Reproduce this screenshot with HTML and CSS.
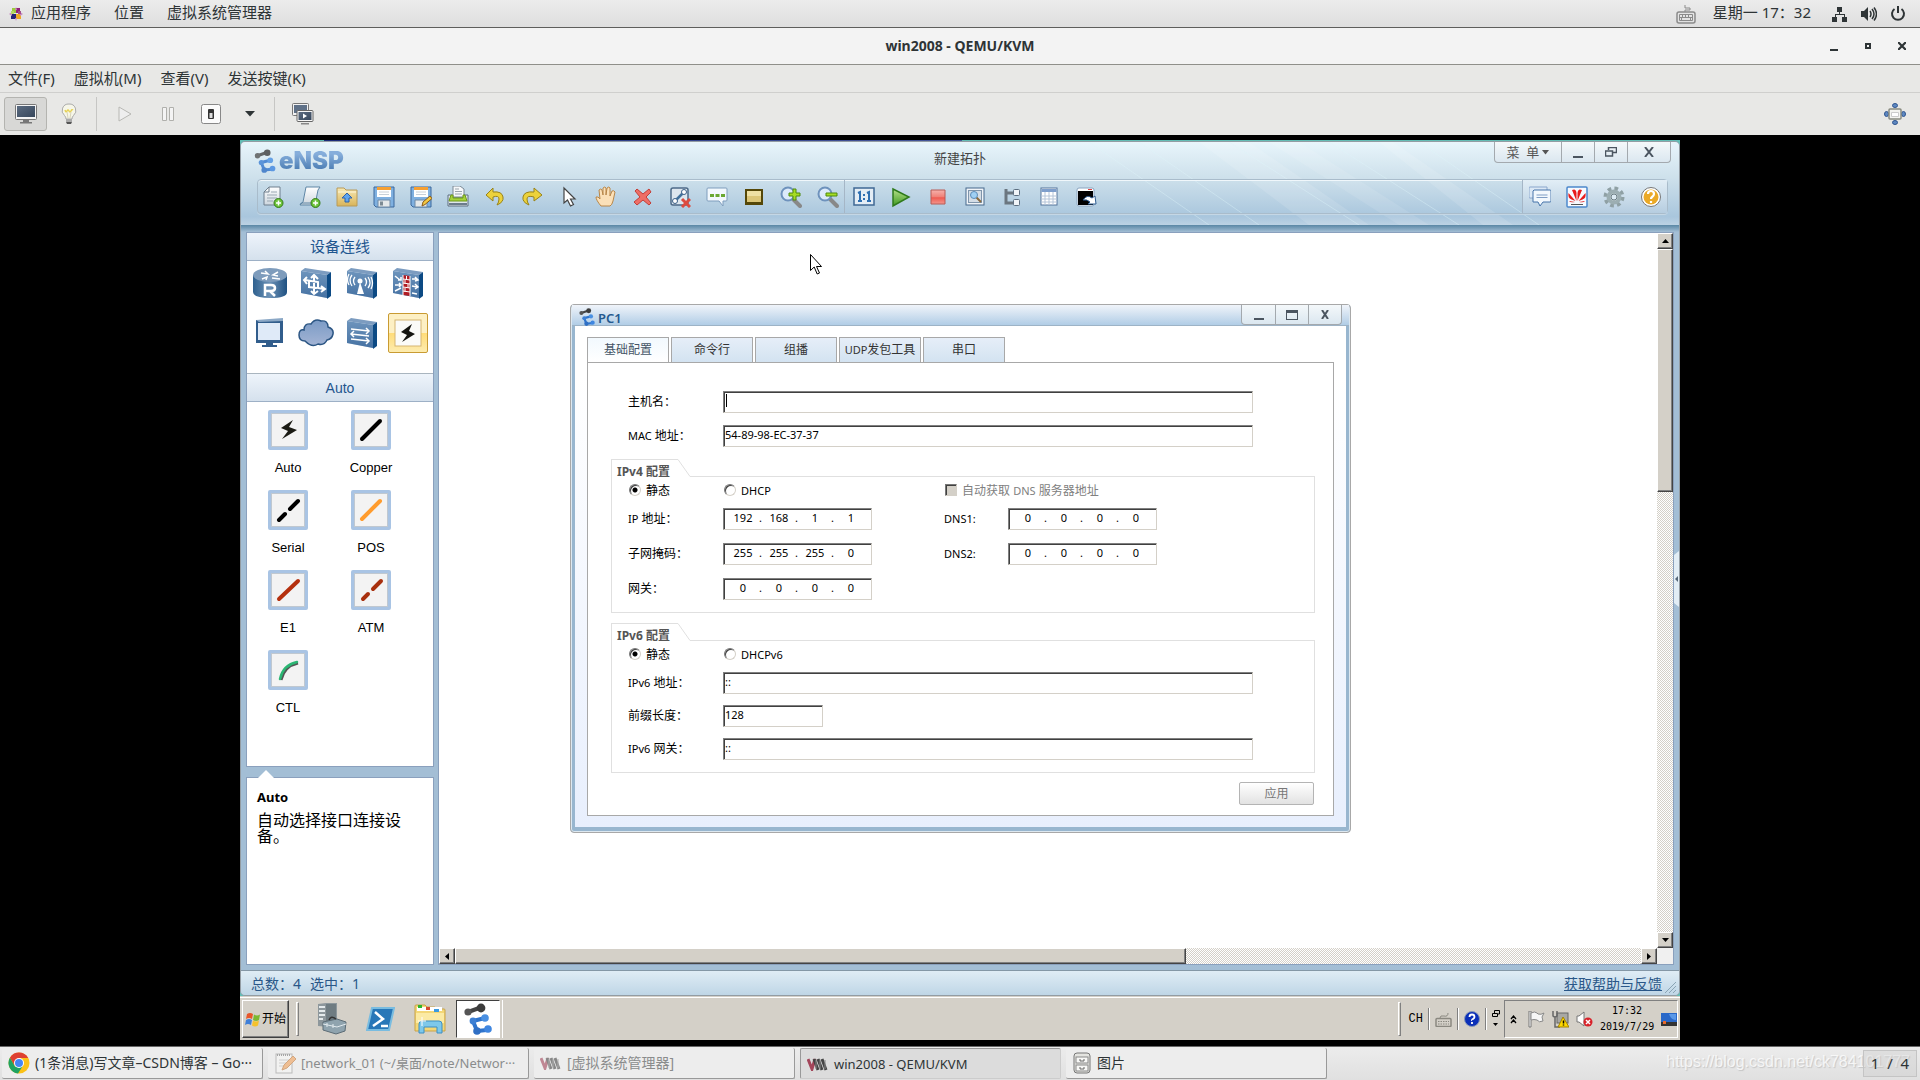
FILE: index.html
```html
<!DOCTYPE html>
<html lang="zh-CN">
<head>
    <meta charset="UTF-8">
    <meta name="viewport" content="width=device-width, initial-scale=1.0">
    <title>win2008 - QEMU/KVM</title>
    <link rel="stylesheet" href="styles.css">
</head>
<body>
    <!-- shared gradients and the eNSP logo -->
    <svg class="defs" aria-hidden="true">
        <defs>
            <linearGradient id="gBlue" x1="0" y1="0" x2="0" y2="1"><stop offset="0" stop-color="#8fb0d3"/><stop offset="1" stop-color="#4c76a8"/></linearGradient>
            <linearGradient id="gPaper" x1="0" y1="0" x2="0" y2="1"><stop offset="0" stop-color="#ffffff"/><stop offset="1" stop-color="#cdd6de"/></linearGradient>
            <linearGradient id="gGreen" x1="0" y1="0" x2="0" y2="1"><stop offset="0" stop-color="#b6e08a"/><stop offset="1" stop-color="#3f9a20"/></linearGradient>
            <linearGradient id="gGold" x1="0" y1="0" x2="0" y2="1"><stop offset="0" stop-color="#f7e9b4"/><stop offset="1" stop-color="#d9b45a"/></linearGradient>
            <linearGradient id="gRed" x1="0" y1="0" x2="0" y2="1"><stop offset="0" stop-color="#f6b2ac"/><stop offset=".5" stop-color="#f08076"/><stop offset=".55" stop-color="#ee5a50"/><stop offset="1" stop-color="#f4978e"/></linearGradient>
            <linearGradient id="gScreen" x1="0" y1="0" x2="1" y2="1"><stop offset="0" stop-color="#5b6b80"/><stop offset="1" stop-color="#37475c"/></linearGradient>
            <linearGradient id="gRouter" x1="0" y1="0" x2="1" y2="0"><stop offset="0" stop-color="#2f618f"/><stop offset=".5" stop-color="#6d92b6"/><stop offset="1" stop-color="#1f5182"/></linearGradient>
            <linearGradient id="gCloud" x1="0" y1="0" x2="0" y2="1"><stop offset="0" stop-color="#7b9bc6"/><stop offset="1" stop-color="#a3b4d4"/></linearGradient>
        </defs>
        <symbol id="ensp" viewBox="0 0 28 32">
            <path d="M4 9L18 4" stroke="#444" stroke-width="4"/>
            <circle cx="4" cy="9" r="3.6" fill="#555"/><circle cx="17" cy="5" r="4.4" fill="#3c3c3c"/>
            <path d="M21 15L9 18L13 28L23 27" fill="none" stroke="#2f74cc" stroke-width="4" stroke-linejoin="round"/>
            <circle cx="21" cy="15" r="3.8" fill="#4a90e2"/><circle cx="9" cy="18" r="3.4" fill="#3c7fd4"/>
            <circle cx="13" cy="28" r="3.8" fill="#2f6fc4"/><circle cx="24" cy="26" r="3.8" fill="#3f86e0"/>
        </symbol>
        <symbol id="vmm" viewBox="0 0 22 14">
            <path d="M1 2l4 10 3-10" fill="none" stroke="#a3455a" stroke-width="3"/>
            <path d="M7 2l4 11M11 2l4 11M15 2l4 11" stroke="#444" stroke-width="3"/>
            <path d="M9 12V3M13 12V3M18 12V3" stroke="#888" stroke-width="1"/>
        </symbol>
        <symbol id="box" viewBox="0 0 34 32">
            <path d="M2 4L6 1L32 5L28 8z" fill="#7c9cc0"/><path d="M28 8L32 5V29L28 32z" fill="#0c4a84"/>
            <path d="M2 4L28 8V31L2 26z" fill="url(#gBlue)"/><path d="M2 4L28 8V31L2 26z" fill="#3d6b9c" fill-opacity=".4"/>
        </symbol>
    </svg>

    <header class="panel">
        <nav class="panel-menu">
            <svg width="14" height="14" viewBox="0 0 14 14"><rect x="3" y="1" width="4" height="5" fill="#9ccc3c"/><rect x="7" y="1" width="4" height="5" fill="#932279"/><rect x="2" y="7" width="5" height="5" fill="#262577"/><rect x="7" y="7" width="5" height="5" fill="#efa724"/><path d="M7 0l1 3H6zM7 14l1-3H6zM0 7l3-2v4zM14 7l-3-2v4z" fill="#c88ac0"/><rect x="2" y="4" width="3" height="3" fill="#b8d868"/><rect x="9" y="4" width="3" height="3" fill="#a14f8c"/></svg>
            <a href="#">应用程序</a>
            <a href="#">位置</a>
            <a href="#">虚拟系统管理器</a>
        </nav>
        <div class="panel-status">
            <svg class="kbd" width="20" height="20" viewBox="0 0 20 20" fill="none" stroke="#8b8b8b"><path d="M9 8V6h5V4H9V1"/><rect x="1" y="8" width="18" height="11" rx="2" stroke-width="1.5"/><path d="M3.5 10.500h13v6h-13zM3.500 13.500h13M6.500 10.500v3M9.500 10.500v3M12.500 10.500v3M5.500 13.500v3M14.500 13.500v3"/></svg>
            <time>星期一 17：32</time>
            <svg width="16" height="16" viewBox="0 0 16 16" fill="#2e3436"><path d="M5 1h5v5H8v2h5v3h2v5h-5v-5h2V9H4v2h1v5H0v-5h3V8h4V6H5z"/></svg>
            <svg width="16" height="16" viewBox="0 0 16 16" fill="#2e3436"><path d="M0 5h3l4-4v14l-4-4H0z"/><path d="M9 5q2 3 0 6M11 3q4 5 0 10M13 1.500q5 6.500 0 13" fill="none" stroke="#2e3436" stroke-width="1.500"/></svg>
            <svg width="16" height="16" viewBox="0 0 16 16" fill="none" stroke="#2e3436" stroke-width="2"><path d="M4.500 3a6 6 0 1 0 7 0M8 0v7"/></svg>
        </div>
    </header>

    <div class="titlebar">
        <h1>win2008 - QEMU/KVM</h1>
        <div class="title-buttons">
            <button aria-label="最小化"><svg width="8" height="10" viewBox="0 0 8 10"><path d="M0 8h8v2H0z"/></svg></button>
            <button aria-label="最大化"><svg width="6" height="6" viewBox="0 0 6 6"><path d="M0 0h6v6H0zM2 2v2h2V2z" fill-rule="evenodd"/></svg></button>
            <button aria-label="关闭"><svg width="8" height="8" viewBox="0 0 8 8"><path d="M0 0l8 8M8 0L0 8" stroke="#2e3436" stroke-width="2.200"/></svg></button>
        </div>
    </div>

    <nav class="menubar">
        <a href="#">文件(F)</a>
        <a href="#">虚拟机(M)</a>
        <a href="#">查看(V)</a>
        <a href="#">发送按键(K)</a>
    </nav>

    <div class="toolbar">
        <button class="active" aria-label="控制台"><svg width="22" height="20" viewBox="0 0 22 20"><rect x=".5" y=".5" width="21" height="15" rx="1" fill="#f4f4f4" stroke="#777"/><rect x="2" y="2" width="18" height="11" fill="url(#gScreen)"/><path d="M8 16h6v2h3v1.500H5V18h3z" fill="#777"/></svg></button>
        <button aria-label="详情"><svg width="16" height="22" viewBox="0 0 16 22"><path d="M8 1a6.500 6.500 0 0 0-4.500 11.500Q5 14 5 16h6q0-2 1.500-3.500A6.500 6.500 0 0 0 8 1z" fill="#f6f6e8" stroke="#aaa"/><path d="M4 7q1 3 2 1t2 0 2 0 2-1" fill="none" stroke="#e6d255" stroke-width="1.500"/><path d="M6 9l1 6M10 9l-1 6" stroke="#d8d4b8"/><path d="M5 16h6v3H5z" fill="#aaa"/><path d="M5 19h6l-1 2H6z" fill="#555"/></svg></button>
        <i class="sep"></i>
        <button aria-label="运行"><svg width="14" height="16" viewBox="0 0 14 16"><path d="M1 1l12 7-12 7z" fill="#eee" stroke="#b8b8b4"/></svg></button>
        <button aria-label="暂停"><svg width="14" height="14" viewBox="0 0 14 14" fill="#f4f4f4" stroke="#b0b0ac"><path d="M1.500.5h4v13h-4zM8.500.5h4v13h-4z"/></svg></button>
        <button aria-label="关机"><svg width="20" height="20" viewBox="0 0 20 20"><rect x=".5" y=".5" width="19" height="19" rx="2" fill="#fbfbfb" stroke="#888"/><rect x="7" y="5" width="6" height="10" rx="1" fill="#333"/><rect x="8.500" y="9" width="3" height="5" fill="#ddd"/></svg></button>
        <button class="drop" aria-label="更多"><svg width="10" height="6" viewBox="0 0 10 6"><path d="M0 0h10L5 5.500z" fill="#2e3436"/></svg></button>
        <i class="sep"></i>
        <button aria-label="快照"><svg width="22" height="22" viewBox="0 0 22 22"><rect x=".5" y=".5" width="16" height="12" rx="1" fill="#f2f2f2" stroke="#777"/><rect x="2" y="2" width="13" height="8" fill="#5f7188"/><rect x="5" y="7.500" width="16" height="11" rx="1" fill="#f6f6f6" stroke="#666"/><rect x="6.500" y="9" width="13" height="8" fill="url(#gScreen)"/><path d="M11 10.500l4 2.500-4 2.500z" fill="#fff"/><path d="M9 20h8v1.500H9z" fill="#888"/></svg></button>
        <button class="full" aria-label="全屏"><svg width="22" height="22" viewBox="0 0 22 22"><g fill="#5d87c0" stroke="#2f5590"><ellipse cx="11" cy="2.500" rx="2.500" ry="2"/><ellipse cx="11" cy="19.500" rx="2.500" ry="2"/><ellipse cx="2.500" cy="11" rx="2" ry="2.500"/><ellipse cx="19.500" cy="11" rx="2" ry="2.500"/></g><rect x="5" y="6" width="12" height="10" rx="1" fill="#f4f4f0" stroke="#888a80" stroke-width="1.500"/><path d="M7.500 9.500h7v4h-7z" fill="#fff" stroke="#ccc"/></svg></button>
    </div>

    <main class="viewer">
        <div class="guest">
            <section class="ensp">
                <header class="ensp-head">
                    <svg class="streaks" viewBox="0 0 480 83" preserveAspectRatio="none" aria-hidden="true"><g fill="#fff"><path opacity=".12" d="M120 0h50l120 83h-60z"/><path opacity=".1" d="M190 0h30l130 83h-30z"/><path opacity=".12" d="M300 0h14l120 83h-30z"/></g><path d="M10 0l120 83M60 0l120 83M150 0l130 83M250 0l130 83M340 0l120 83" stroke="#dff4fa" stroke-opacity=".4"/></svg>
                    <div class="caption">
                        <div class="brand"><svg width="22" height="24"><use href="#ensp"/></svg><b>eNSP</b></div>
                        <h2>新建拓扑</h2>
                        <div class="win-buttons">
                            <button class="menu-button">菜&nbsp; 单<svg width="7" height="5" viewBox="0 0 7 5"><path d="M0 0h7L3.500 4.500z" fill="#555"/></svg></button>
                            <button aria-label="最小化"><svg width="10" height="12" viewBox="0 0 10 12"><path d="M0 10h10v2H0z" fill="#4b5560"/></svg></button>
                            <button aria-label="还原"><svg width="12" height="10" viewBox="0 0 12 10" fill="none" stroke="#4b5560"><path d="M3.500 3V.5h8v5H8" stroke-width="1.500"/><path d="M.5 4h7v5h-7z" stroke-width="1.500"/></svg></button>
                            <button class="close" aria-label="关闭"><svg width="10" height="10" viewBox="0 0 10 10"><path d="M1 0l8 10M9 0L1 10" stroke="#4b5560" stroke-width="2"/></svg></button>
                        </div>
                    </div>
                    <div class="tools">
                        <div class="tool-group">
                            <button aria-label="新建拓扑"><svg viewBox="0 0 22 22"><path d="M7 1h11v18H2V6z" fill="url(#gPaper)" stroke="#6f7f8d"/><path d="M7 1v5H2" fill="none" stroke="#6f7f8d"/><path d="M9 6h6M5 9h10M5 12h10M5 15h6" stroke="#9aa7b2"/><circle cx="16.500" cy="17" r="4.500" fill="#6cc43a" stroke="#357a18"/><path d="M16.500 14.500v5M14 17h5" stroke="#fff" stroke-width="1.500"/></svg></button>
                            <button aria-label="新建试卷工程"><svg viewBox="0 0 22 22"><path d="M7 1h14l-2 3-3 15H1l3-3z" fill="url(#gPaper)" stroke="#5f86a5"/><path d="M1 19l1-2h12" fill="none" stroke="#5f86a5"/><circle cx="16.500" cy="17" r="4.500" fill="#6cc43a" stroke="#357a18"/><path d="M16.500 14.500v5M14 17h5" stroke="#fff" stroke-width="1.500"/></svg></button>
                            <button aria-label="打开"><svg viewBox="0 0 22 22"><path d="M1 2h7l2 2h11v16H1z" fill="url(#gGold)" stroke="#b89a58"/><path d="M2 6h18" stroke="#fff6d8"/><path d="M11 7l5 5h-3v4H9v-4H6z" fill="#5fa4ee" stroke="#2f62a8"/></svg></button>
                            <button aria-label="保存"><svg viewBox="0 0 22 22"><path d="M1 1h20v20H3l-2-2z" fill="#7fb0e0" stroke="#3c689c"/><path d="M4 1h14v10H4z" fill="#fff"/><path d="M4 1h14v3H4z" fill="#f6a032"/><path d="M6 6h10M6 8.500h10" stroke="#c8d0d8"/><path d="M5 14h12v7H5z" fill="#e4e8ea" stroke="#6e8aa6"/><path d="M7 15.500h3v4H7z" fill="#7c8a94"/></svg></button>
                            <button aria-label="另存为"><svg viewBox="0 0 22 22"><path d="M1 1h20v20H3l-2-2z" fill="#7fb0e0" stroke="#3c689c"/><path d="M4 1h14v10H4z" fill="#fff"/><path d="M4 1h14v3H4z" fill="#f6a032"/><path d="M6 6h10M6 8.500h10" stroke="#c8d0d8"/><path d="M5 14h12v7H5z" fill="#e4e8ea" stroke="#6e8aa6"/><path d="M12 20l1-4 7-6 2 2.500-7 6z" fill="#f4c842" stroke="#8a5a18"/></svg></button>
                            <button aria-label="打印"><svg viewBox="0 0 22 22"><path d="M6 0h7l4 3v8H6z" fill="#f6f8fa" stroke="#7a8894"/><path d="M8 3h4M8 5.500h7M8 8h7" stroke="#9aa4ac"/><path d="M1 9h4v3h12V9h4v11H1z" fill="#dfe6ec" stroke="#5c6e80"/><path d="M4 9h2v3h10V9h2l2 6H2z" fill="#a4d23c" stroke="#6f9a18"/><path d="M2 18h18" stroke="#6c7c8c" stroke-width="2"/></svg></button>
                            <button aria-label="撤销"><svg viewBox="0 0 22 22"><path d="M9 2L2 9l7 6v-4q6-2 6 2 0 3-2 6 7-3 6-8-1-6-10-5z" fill="#ecd23c" stroke="#97821a"/></svg></button>
                            <button aria-label="恢复"><svg viewBox="0 0 22 22"><path d="M13 2l8 7-8 6v-4q-7-2-7 2 0 3 2 6-7-3-6-8 1-6 11-5z" fill="#ecd23c" stroke="#97821a"/></svg></button>
                            <button aria-label="选择"><svg viewBox="0 0 22 22"><path d="M6 2v15l3.500-3 3 6 3-1.500-3-5.500H17z" fill="#fff" stroke="#444" stroke-width="1.200"/></svg></button>
                            <button aria-label="拖动"><svg viewBox="0 0 22 22"><path d="M6 20Q1 14 1 11q2-1 4 2L4 4q2-2 3 0l1 5V2q2-2 3 0v7l1-7q2-2 3 0v8l2-5q2-1 3 1l-2 9q-1 4-3 5z" fill="#fbe0b8" stroke="#b88648"/></svg></button>
                            <button aria-label="删除"><svg viewBox="0 0 22 22"><path d="M5 3l6 5 6-5 2 3-5 5 5 6-2 2-6-5-6 5-3-3 6-5-5-6z" fill="#ee6e66" stroke="#c23e38"/></svg></button>
                            <button aria-label="删除连线"><svg viewBox="0 0 22 22"><rect x="2" y="2" width="17" height="17" rx="2" fill="#dde6ee" stroke="#4d6a88" stroke-width="1.500"/><path d="M6 15L15 6" stroke="#42719c" stroke-width="2.500"/><circle cx="6" cy="15" r="2.500" fill="#fff" stroke="#3b6088"/><circle cx="15" cy="6" r="2.500" fill="#fff" stroke="#3b6088"/><path d="M13 13l8 8M21 13l-8 8" stroke="#dc4a3e" stroke-width="3"/></svg></button>
                            <button aria-label="文本"><svg viewBox="0 0 22 22"><path d="M2 2h18q1 0 1 1v11q0 1-1 1h-3v5l-4-5H2q-1 0-1-1V3q0-1 1-1z" fill="#f2f8fd" stroke="#7f9dbd"/><path d="M4 8h4v3H4zM9.500 8h4v3h-4zM15 8h4v3h-4z" fill="#6aa832"/></svg></button>
                            <button aria-label="调色板"><svg viewBox="0 0 22 22"><path d="M2 3h18v16H2z" fill="#554708"/><path d="M4 5h14v11H4z" fill="#dcc678"/><path d="M4 5h14v5H4z" fill="#eee0a4"/></svg></button>
                            <button aria-label="放大"><svg viewBox="0 0 22 22"><path d="M13 13l7 7" stroke="#888" stroke-width="4" stroke-linecap="round"/><circle cx="8" cy="8" r="6.500" fill="#dceafa" stroke="#6e92bc" stroke-width="2"/><path d="M9 7h4V3h3v4h4v3h-4v4h-3v-4H9z" fill="#a6dc24" stroke="#4f8a0e"/></svg></button>
                            <button aria-label="缩小"><svg viewBox="0 0 22 22"><path d="M13 13l7 7" stroke="#888" stroke-width="4" stroke-linecap="round"/><circle cx="8" cy="8" r="6.500" fill="#dceafa" stroke="#6e92bc" stroke-width="2"/><path d="M9 7h11v3H9z" fill="#a6dc24" stroke="#4f8a0e"/></svg></button>
                        </div>
                        <div class="tool-group middle">
                            <button aria-label="恢复比例"><svg viewBox="0 0 22 22"><rect x="1" y="2" width="20" height="17" fill="#e4edf5" stroke="#3f6894" stroke-width="1.500"/><path d="M5 7l2-1v9M5 15h4M14 7l2-1v9M14 15h4" fill="none" stroke="#2d6fb2" stroke-width="2"/><path d="M10 8h2v2h-2zM10 12h2v2h-2z" fill="#2d6fb2"/></svg></button>
                            <button aria-label="开启设备"><svg viewBox="0 0 22 22"><path d="M3 3l16 8L3 20z" fill="url(#gGreen)" stroke="#2f7a1c" stroke-width="1.500"/></svg></button>
                            <button aria-label="停止设备"><svg viewBox="0 0 22 22"><path d="M4 4h14v14H4z" fill="url(#gRed)" stroke="#b85a54"/></svg></button>
                            <button aria-label="采集数据报文"><svg viewBox="0 0 22 22"><rect x="2" y="2" width="18" height="17" fill="#f0f4f8" stroke="#46688c"/><rect x="4.500" y="4.500" width="13" height="12" fill="#d4dde6" stroke="#7f95ab"/><path d="M12 11l5 5" stroke="#8a6a3c" stroke-width="2"/><circle cx="10" cy="9" r="3.500" fill="#9fd0f4" stroke="#5c8cb8"/></svg></button>
                            <button aria-label="显示接口"><svg viewBox="0 0 22 22" fill="none"><path d="M5 3v14h8M5 7h8" stroke="#6b7680" stroke-width="3"/><rect x="12.500" y="3.500" width="6" height="6" rx="1" fill="#f0f4f8" stroke="#5c6e80"/><rect x="12.500" y="13.500" width="6" height="6" rx="1" fill="#f0f4f8" stroke="#5c6e80"/></svg></button>
                            <button aria-label="显示网格"><svg viewBox="0 0 22 22"><rect x="3" y="2" width="16" height="17" fill="#fff" stroke="#54749c"/><path d="M3.500 3h15v3h-15z" fill="#7f9fcc"/><path d="M3 10h16M3 13h16M3 16h16M7 6v13M11 6v13M15 6v13" stroke="#b4c4d8"/></svg></button>
                            <button aria-label="打开CLI"><svg viewBox="0 0 22 22"><rect x="2" y="2" width="17" height="18" rx="2" fill="#fff" stroke="#8aa4c0"/><path d="M3 5h15v14H3z" fill="#000"/><path d="M13 3.500h4" stroke="#d44"/><path d="M8 14q4-6 9-2l3-2 1 8h-8l2-2q-3-3-7-2z" fill="#fff" stroke="#2f5c90"/></svg></button>
                        </div>
                        <div class="tool-group right">
                            <button aria-label="论坛"><svg viewBox="0 0 22 22"><path d="M0 2q0-1 1-1h17v11H1q-1 0-1-1z" fill="#dbe8f5" stroke="#8aa6cc"/><path d="M5 4h16q1 0 1 1v10q0 1-1 1h-7l-3 4-2-4H4V5z" fill="#f2f8fd" stroke="#4674aa"/><path d="M7.500 9h11M7.500 11.500h11" stroke="#7f9dc4"/></svg></button>
                            <button aria-label="华为官网"><svg viewBox="0 0 22 22"><rect x="1" y="1" width="20" height="20" rx="1" fill="#f6faff" stroke="#4c88cc" stroke-width="1.500"/><g fill="#e81c1c"><path d="M10.500 15L6 4q4-2 4.500 3zM11.500 15L16 4q-4-2-4.500 3zM9.500 15L2.500 7q-1 5 3 6.500zM12.500 15l7-8q1 5-3 6.500zM9 16l-6-1q1 2 6 1zM13 16l6-1q-1 2-6 1z"/></g><path d="M5 18.500h12" stroke="#555"/></svg></button>
                            <button aria-label="设置"><svg viewBox="0 0 22 22"><circle cx="11" cy="11" r="8.500" fill="none" stroke="#8fa0a4" stroke-width="4" stroke-dasharray="3.600 3.100"/><circle cx="11" cy="11" r="5.500" fill="#e4eeee" stroke="#9caeb2" stroke-width="4"/><circle cx="11" cy="11" r="3" fill="#dceaf2" stroke="#6c7e84"/></svg></button>
                            <button aria-label="帮助"><svg viewBox="0 0 22 22"><circle cx="11" cy="11" r="9.500" fill="#fff" stroke="#777"/><circle cx="11" cy="11" r="7.500" fill="#eaa927"/><path d="M8 8q0-3 3-3t3 3q0 1.500-2 3-1 .700-1 2M11 15v2" fill="none" stroke="#fff" stroke-width="2.200"/></svg></button>
                        </div>
                    </div>
                </header>

                <div class="ensp-main">
                    <aside class="sidebar">
                        <div class="devices">
                            <h3>设备连线</h3>
                            <div class="device-grid">
                                <button aria-label="路由器"><svg viewBox="0 0 36 32"><path d="M1 8v17q0 6 17 6t17-6V8z" fill="url(#gRouter)"/><ellipse cx="18" cy="8" rx="17" ry="7" fill="#7e9cbc"/><path d="M9 6l7 1-3-3M26 5l-5 3 5 1M10 12l5-2-1 3M20 11l8 1" fill="none" stroke="#fff" stroke-width="1.500"/><path d="M13 29V18h6q4 0 4 3t-4 3h-6M18 24l5 5" fill="none" stroke="#fff" stroke-width="2.500"/></svg></button>
                                <button aria-label="交换机"><svg viewBox="0 0 34 32"><use href="#box"/><path d="M15 8v19M12 11l3-3 4 4M12 24l3 3 4-3M6 13l13 2v6l6 1M8 10l-3 3 3 4M10 14v6l8 1M22 19l4 3-4 3" fill="none" stroke="#fff" stroke-width="2"/></svg></button>
                                <button aria-label="无线局域网"><svg viewBox="0 0 34 32"><use href="#box"/><path d="M15 15l4 12h-7z" fill="#fff"/><circle cx="15" cy="14" r="2.500" fill="#fff"/><path d="M10 10q-3 4 0 8M7 8q-4 5 0 11M4 7q-3 6 0 11M20 11q3 4 0 8M23 10q4 6 0 11M26 10q3 6 0 12" fill="none" stroke="#fff" stroke-width="1.300"/></svg></button>
                                <button aria-label="防火墙"><svg viewBox="0 0 34 32"><use href="#box"/><path d="M12 8l7 1v20l-7-1z" fill="#b01c24"/><path d="M12 12l7 1M12 16l7 1M12 20l7 1M12 24l7 1M15.500 9v4M14 13v4M17 17v4M14 21v4M12 8v20M19 9v20" stroke="#fff"/><path d="M4 9l5 4M4 18h6M4 24l6-3M7 13h3v-3M8 16l2 2-2 2M21 12h5M21 19l5 1M21 26l5 1M24 10l3 3-3 1M24 17l3 3-3 2" fill="none" stroke="#fff" stroke-width="1.500"/></svg></button>
                                <button aria-label="终端"><svg viewBox="0 0 34 32"><path d="M3 3h27v23H3z" fill="#315d8c"/><path d="M3 3l27-2v3L6 5z" fill="#8ba8c6"/><path d="M5 6h22v17H5z" fill="#dfeaf8"/><path d="M13 25h7v3h4v2H9v-2h4z" fill="#315d8c"/></svg></button>
                                <button aria-label="其他设备"><svg viewBox="0 0 36 32"><path d="M7 24q-6 0-6-6t5-5q0-7 7-6 4-6 10-3 7-1 7 6 6 2 5 7t-6 6q-3 6-9 4-6 4-13-3z" fill="url(#gCloud)" stroke="#2c5684" stroke-width="1.500"/></svg></button>
                                <button aria-label="自定义设备"><svg viewBox="0 0 34 32"><use href="#box"/><path d="M6 12l18 2M21 11l3 3-3 3M6 17l18 2M9 14l-3 3 3 3M6 22l18 2M21 21l3 3-3 3" fill="none" stroke="#fff" stroke-width="1.500"/></svg></button>
                                <button class="selected" aria-label="设备连线"><svg viewBox="0 0 28 28"><rect x="1" y="1" width="26" height="26" fill="#fbfbf8" stroke="#d5b572"/><path d="M18 5L7 13l6 3-5 7 13-8-6-3z" fill="#151510"/></svg></button>
                            </div>
                            <h3>Auto</h3>
                            <div class="cable-grid">
                                <button><svg viewBox="0 0 28 28"><path d="M19 4L7 12l7 3-6 8 15-9-8-3z" fill="#1b1b14"/></svg><span>Auto</span></button>
                                <button><svg viewBox="0 0 28 28"><path d="M5 23L23 5" stroke="#000" stroke-width="4" stroke-linecap="round"/></svg><span>Copper</span></button>
                                <button><svg viewBox="0 0 28 28"><path d="M5 24l6-6M16 13l8-8" stroke="#000" stroke-width="4" stroke-linecap="round"/></svg><span>Serial</span></button>
                                <button><svg viewBox="0 0 28 28"><path d="M5 23L23 5" stroke="#ff9c2e" stroke-width="4" stroke-linecap="round"/></svg><span>POS</span></button>
                                <button><svg viewBox="0 0 28 28"><path d="M5 23L24 5" stroke="#b5300e" stroke-width="4" stroke-linecap="round"/></svg><span>E1</span></button>
                                <button><svg viewBox="0 0 28 28"><path d="M6 23l5-5M16 13l8-8" stroke="#a8300e" stroke-width="4" stroke-linecap="round"/></svg><span>ATM</span></button>
                                <button><svg viewBox="0 0 28 28"><path d="M7 24q3-14 17-17" fill="none" stroke="#555" stroke-width="3"/><path d="M6 23q3-14 17-17" fill="none" stroke="#2bb673" stroke-width="2.500" stroke-linecap="round"/></svg><span>CTL</span></button>
                            </div>
                        </div>
                        <div class="description">
                            <b>Auto</b>
                            <p>自动选择接口连接设备。</p>
                        </div>
                    </aside>

                    <div class="canvas">
                        <div class="topology">
                            <svg class="cursor" width="12" height="21" viewBox="0 0 12 21"><path d="M.5.5v16l3.700-3.500 3 7 2.300-1-3-6.500h5z" fill="#fff" stroke="#000"/></svg>

                            <section class="dialog">
                                <header class="dialog-title">
                                    <svg width="18" height="18"><use href="#ensp"/></svg>
                                    <h2>PC1</h2>
                                    <div class="win-buttons">
                                        <button aria-label="最小化"><svg width="10" height="10" viewBox="0 0 10 10"><path d="M0 8h10v2H0z" fill="#4b5560"/></svg></button>
                                        <button aria-label="最大化"><svg width="12" height="10" viewBox="0 0 12 10"><path d="M0 0h12v10H0zM1 3v6h10V3z" fill="#4b5560" fill-rule="evenodd"/></svg></button>
                                        <button aria-label="关闭"><svg width="8" height="9" viewBox="0 0 8 9"><path d="M1 0l6 9M7 0L1 9" stroke="#4b5560" stroke-width="2"/></svg></button>
                                    </div>
                                </header>
                                <form class="dialog-body">
                                    <div class="tabs">
                                        <button type="button" class="current">基础配置</button>
                                        <button type="button">命令行</button>
                                        <button type="button">组播</button>
                                        <button type="button"><span class="latin">UDP</span>发包工具</button>
                                        <button type="button">串口</button>
                                    </div>
                                    <div class="tab-panel">
                                        <div class="fields">
                                            <label for="hostName">主机名：</label>
                                            <div class="caret-field"><input type="text" id="hostName"></div>
                                            <label for="mac"><span class="latin">MAC</span> 地址：</label>
                                            <input type="text" id="mac" value="54-89-98-EC-37-37">
                                        </div>

                                        <section class="group">
                                            <div class="group-tab"><h3>IPv4 配置</h3><svg width="13" height="18" viewBox="0 0 13 18"><path d="M0 .5L12 17.500h1" fill="none" stroke="#e0e0e0"/></svg></div>
                                            <div class="group-body">
                                                <div class="modes">
                                                    <label><input type="radio" name="v4" checked>静态</label>
                                                    <label><input type="radio" name="v4"><span class="latin">DHCP</span></label>
                                                    <label class="disabled"><input type="checkbox" disabled><span>自动获取 <span class="latin">DNS</span> 服务器地址</span></label>
                                                </div>
                                                <div class="ip-grid">
                                                    <label for="ip"><span class="latin">IP</span> 地址：</label>
                                                    <div class="ip"><input id="ip" value="192">.<input value="168" aria-label="IP 2">.<input value="1" aria-label="IP 3">.<input value="1" aria-label="IP 4"></div>
                                                    <label for="dns1" class="latin">DNS1:</label>
                                                    <div class="ip"><input id="dns1" value="0">.<input value="0" aria-label="DNS1 2">.<input value="0" aria-label="DNS1 3">.<input value="0" aria-label="DNS1 4"></div>
                                                    <label for="mask">子网掩码：</label>
                                                    <div class="ip"><input id="mask" value="255">.<input value="255" aria-label="掩码 2">.<input value="255" aria-label="掩码 3">.<input value="0" aria-label="掩码 4"></div>
                                                    <label for="dns2" class="latin">DNS2:</label>
                                                    <div class="ip"><input id="dns2" value="0">.<input value="0" aria-label="DNS2 2">.<input value="0" aria-label="DNS2 3">.<input value="0" aria-label="DNS2 4"></div>
                                                    <label for="gateway">网关：</label>
                                                    <div class="ip"><input id="gateway" value="0">.<input value="0" aria-label="网关 2">.<input value="0" aria-label="网关 3">.<input value="0" aria-label="网关 4"></div>
                                                </div>
                                            </div>
                                        </section>

                                        <section class="group">
                                            <div class="group-tab"><h3>IPv6 配置</h3><svg width="13" height="18" viewBox="0 0 13 18"><path d="M0 .5L12 17.500h1" fill="none" stroke="#e0e0e0"/></svg></div>
                                            <div class="group-body">
                                                <div class="modes">
                                                    <label><input type="radio" name="v6" checked>静态</label>
                                                    <label><input type="radio" name="v6"><span class="latin">DHCPv6</span></label>
                                                </div>
                                                <div class="fields">
                                                    <label for="ip6"><span class="latin">IPv6</span> 地址：</label>
                                                    <input type="text" id="ip6" value="::">
                                                    <label for="prefix">前缀长度：</label>
                                                    <input type="text" id="prefix" class="short" value="128">
                                                    <label for="gateway6"><span class="latin">IPv6</span> 网关：</label>
                                                    <input type="text" id="gateway6" value="::">
                                                </div>
                                            </div>
                                        </section>
                                        <button type="button" class="apply">应用</button>
                                    </div>
                                </form>
                            </section>
                        </div>
                        <div class="scroll vertical">
                            <button aria-label="向上"><svg width="7" height="4" viewBox="0 0 7 4"><path d="M0 4h7L3.500 0z"/></svg></button>
                            <div class="thumb"></div>
                            <button class="end" aria-label="向下"><svg width="7" height="4" viewBox="0 0 7 4"><path d="M0 0h7L3.500 4z"/></svg></button>
                        </div>
                        <div class="scroll horizontal">
                            <button aria-label="向左"><svg width="4" height="7" viewBox="0 0 4 7"><path d="M4 0v7L0 3.500z"/></svg></button>
                            <div class="thumb"></div>
                            <button class="end" aria-label="向右"><svg width="4" height="7" viewBox="0 0 4 7"><path d="M0 0v7l4-3.500z"/></svg></button>
                        </div>
                        <div class="scroll-corner"></div>
                    </div>
                    <div class="splitter"><svg width="5" height="56" viewBox="0 0 5 56"><path d="M5 0L0 4v48l5 4z" fill="#e2edf5"/><path d="M4 25v6l-3-3z" fill="#567"/></svg></div>
                </div>

                <footer class="statusbar">
                    <span>总数：4</span>
                    <span>选中：1</span>
                    <a href="#">获取帮助与反馈</a>
                    <svg width="11" height="11" viewBox="0 0 11 11"><path d="M0 11L11 0M4 11l7-7M8 11l3-3" stroke="#8aa4b4"/></svg>
                </footer>
            </section>

            <footer class="taskbar">
                <button class="start"><svg width="16" height="15" viewBox="0 0 16 15"><path d="M2 2q3-2 6 0L7 7Q4 5 1 7z" fill="#e8562a"/><path d="M9 2.500q3 2 6 0L14 8q-3 2-6 0z" fill="#7cb832"/><path d="M1 8q3-2 6 0l-1 5q-3-2-6 0z" fill="#3f7fd8"/><path d="M8 8.500q3 2 6 0l-1 5q-3 2-6 0z" fill="#f6c22c"/></svg>开始</button>
                <i class="grip"></i>
                <button class="quick" aria-label="服务器管理器"><svg width="30" height="32" viewBox="0 0 30 32"><path d="M1 1l8-1h11v18l-8 6-11-1z" fill="#8d979c"/><path d="M9 1h10v17H9z" fill="#6f7c82"/><path d="M2 4h6M2 8h6M2 12h6M2 16h4" stroke="#e4eaec" stroke-width="2"/><path d="M6 19l14-3 9 3-1 9-9 3-13-4z" fill="#8fa3ae" stroke="#5c6c76"/><path d="M12 17q2-5 7-1" fill="none" stroke="#333" stroke-width="1.500"/><path d="M6 21l14 3 9-3M10 20v4M16 21v4" stroke="#e2eaee" fill="none"/></svg></button>
                <button class="quick" aria-label="PowerShell"><svg width="29" height="24" viewBox="0 0 29 24"><path d="M6 1h22l-5 22H1z" fill="#2877b8" stroke="#79bce0" stroke-width="2"/><path d="M9 5l8 7-10 7M15 19h7" fill="none" stroke="#fff" stroke-width="2.500"/></svg></button>
                <button class="quick" aria-label="资源管理器"><svg width="32" height="30" viewBox="0 0 32 30"><path d="M1 5V2q0-1 1-1h9l2 2h8l2 2h7q1 0 1 1v21H1z" fill="#f3d777" stroke="#c9a348"/><path d="M3 3h25v4H3z" fill="#fff"/><path d="M4 1h4v3H4z" fill="#2db52d"/><path d="M12 3h4v3h-4z" fill="#d84830"/><path d="M20 5h5v3h-5z" fill="#3a9be0"/><path d="M2 9h28v10H2z" fill="#fbeaa4"/><path d="M5 29V20q0-3 3-3h17q3 0 3 3v9h-5v-6H10v6z" fill="#7ec8ea" stroke="#3c8fc4"/><path d="M8 13v9M4 17h8" stroke="#fff"/></svg></button>
                <button class="running" aria-label="eNSP"><svg width="28" height="32"><use href="#ensp"/></svg></button>
                <div class="langbar">
                    <i class="grip"></i>
                    <span>CH</span>
                    <i class="line"></i>
                    <svg width="17" height="15" viewBox="0 0 17 15" fill="none" stroke="#8a8880"><path d="M5 6q0-3 4-2t4-3"/><rect x="1" y="6.500" width="15" height="8" rx="1" stroke-width="1.500"/><path d="M3 9.500h11M3 12h11" stroke-dasharray="1.500 1"/></svg>
                    <i class="line"></i>
                    <svg width="16" height="16" viewBox="0 0 16 16"><circle cx="8" cy="8" r="7.500" fill="#0b2fb8" stroke="#8898b8"/><path d="M5.500 6q0-2.500 2.500-2.500T10.500 6q0 1-1.500 2t-1 1.500M8 11v2" fill="none" stroke="#fff" stroke-width="1.800"/></svg>
                    <i class="line"></i>
                    <svg width="8" height="18" viewBox="0 0 8 18"><path d="M2.500 3V.5h5v3.500h-2M.5 3.500h5v3h-5z" fill="none" stroke="#000"/><path d="M1 13h5l-2.500 3z"/></svg>
                </div>
                <div class="tray">
                    <svg width="7" height="9" viewBox="0 0 7 9"><path d="M1 4l2.500-3L6 4M1 8l2.500-3L6 8" fill="none" stroke="#000" stroke-width="1.300"/></svg>
                    <svg width="17" height="17" viewBox="0 0 17 17"><path d="M1 0h2v16H1z" fill="#fff" stroke="#777"/><path d="M3 2q4-2 6 0l1 1q3 1 6-1l-2 4 1 4q-4 2-6-1-3-1-6 0z" fill="#f6f6f6" stroke="#888"/></svg>
                    <svg width="17" height="17" viewBox="0 0 17 17"><rect x="5" y="2" width="11" height="10" fill="#a8a8a4" stroke="#666"/><path d="M1 0v5q2 2 4 0V0M3 6v10h5" fill="none" stroke="#666" stroke-width="1.500"/><path d="M11 6l6 10H6z" fill="#ffd800" stroke="#a08000"/><path d="M11.500 9.500v3M11.500 13.500v1" stroke="#000" stroke-width="1.500"/></svg>
                    <svg width="17" height="17" viewBox="0 0 17 17"><path d="M1 5h2l5-4v14l-5-4H1z" fill="#fff" stroke="#777"/><circle cx="12" cy="11" r="4.500" fill="#d8222a"/><path d="M10 9l4 4M14 9l-4 4" stroke="#fff" stroke-width="1.500"/></svg>
                    <time>17:32<br>2019/7/29</time>
                    <svg width="16" height="13" viewBox="0 0 16 13"><path d="M0 0h16v13H0z" fill="#2a68c8"/><path d="M0 9h16v4H0z" fill="#333"/><path d="M8 1h7v6q-5 0-7-6z" fill="#5a98e8"/><path d="M2 8h3v3H2z" fill="#e86a2a"/></svg>
                </div>
            </footer>
        </div>
    </main>

    <footer class="tasklist">
        <button><svg width="22" height="22" viewBox="0 0 22 22"><circle cx="11" cy="11" r="10.500" fill="#fbc116"/><path d="M11 .5A10.500 10.500 0 0 0 1.900 5.700L6.500 13.500 11 6h9.200A10.500 10.500 0 0 0 11 .5z" fill="#de4032"/><path d="M1.900 5.700A10.500 10.500 0 0 0 10 21.500l5-8-8 1z" fill="#1ea362"/><circle cx="11" cy="11" r="5" fill="#fff"/><circle cx="11" cy="11" r="4" fill="#4486f4"/></svg><span>(1条消息)写文章–CSDN博客 – Go···</span></button>
        <button class="dim small"><svg width="22" height="22" viewBox="0 0 22 22"><rect x="2" y="2" width="16" height="19" fill="#f6f6f4" stroke="#999"/><path d="M3 3h14" stroke="#777" stroke-width="2" stroke-dasharray="1 1"/><path d="M5 8h10M5 11h10M5 14h8" stroke="#bbb"/><path d="M8 18l2-5 9-9 3 3-9 9z" fill="#f0a058" stroke="#c07838"/></svg><span>[network_01 (~/桌面/note/Networ···</span></button>
        <button class="dim"><svg width="22" height="14"><use href="#vmm"/></svg><span>[虚拟系统管理器]</span></button>
        <button class="pressed small"><svg width="22" height="14"><use href="#vmm"/></svg><span>win2008 - QEMU/KVM</span></button>
        <button><svg width="20" height="22" viewBox="0 0 20 22"><rect x="2" y="1" width="16" height="20" rx="3" fill="#e4e4e0" stroke="#777"/><rect x="4" y="5" width="12" height="6" fill="#f8f8f6" stroke="#888"/><rect x="4" y="13" width="12" height="6" fill="#f8f8f6" stroke="#888"/><path d="M8 7v2h4V7M8 15v2h4v-2" fill="none" stroke="#666"/></svg><span>图片</span></button>
        <div class="workspace">1 &nbsp;/ &nbsp;4</div>
        <div class="watermark">https://blog.csdn.net/ck784101777</div>
    </footer>
</body>
</html>
```
FILE: styles.css
```css
* {
    box-sizing: border-box;
}
body {
    margin: 0;
    height: 100vh;
    display: flex;
    flex-direction: column;
    overflow: hidden;
    font: 15px/20px "Noto Sans", "Noto Sans CJK SC", sans-serif;
    color: #2e3436;
    background: #000;
}
h1, h2, h3, p {
    margin: 0;
    font-size: inherit;
    font-weight: normal;
}
a {
    color: inherit;
    text-decoration: none;
}
button {
    display: flex;
    align-items: center;
    justify-content: center;
    padding: 0;
    border: 0;
    background: none;
    font: inherit;
    color: inherit;
}
svg {
    flex: none;
    display: block;
}
.defs {
    position: absolute;
    width: 0;
    height: 0;
}

/* host desktop */
.panel {
    display: flex;
    justify-content: space-between;
    height: 28px;
    padding: 0 14px 0 9px;
    border-bottom: 1px solid #5e5e5c;
    background: linear-gradient(#ececec, #dedede);
}
.panel-menu, .panel-status {
    display: flex;
    align-items: center;
}
.panel-menu {
    gap: 23px;
    padding-bottom: 3px;
}
.panel-menu svg {
    margin: 3px -15px 0 0;
}
.panel-status {
    gap: 13px;
}
.panel-status time {
    margin: 0 8px 3px 4px;
    font-family: "Noto Sans", "Noto Sans CJK TC", sans-serif;
}
.titlebar {
    display: flex;
    align-items: center;
    height: 37px;
    border-bottom: 1px solid #8f8f8a;
    background: #f3f3f3;
    position: relative;
}
.titlebar h1 {
    flex: 1;
    text-align: center;
    font-size: 14px;
    font-weight: bold;
}
.title-buttons {
    display: flex;
    gap: 10px;
    position: absolute;
    right: 6px;
}
.title-buttons button {
    width: 24px;
    height: 24px;
}
.title-buttons svg {
    fill: #2e3436;
}
.menubar {
    display: flex;
    gap: 19px;
    height: 28px;
    padding: 3px 8px;
    border-bottom: 1px solid #cfcfcd;
    background: #e8e8e6;
}
.toolbar {
    display: flex;
    align-items: center;
    height: 42px;
    padding: 0 4px;
    background: #e8e8e6;
}
.toolbar button {
    width: 43px;
    height: 34px;
}
.toolbar .active {
    border: 1px solid #b4b4b0;
    border-radius: 3px;
    background: #d8d8d6;
}
.toolbar .drop {
    width: 36px;
}
.toolbar .full {
    margin-left: auto;
}
.sep {
    width: 1px;
    height: 34px;
    margin: 0 6px;
    background: #c6c6c4;
}
.viewer {
    flex: 1;
    min-height: 0;
    display: flex;
    justify-content: center;
    padding: 5px 0 6px;
}
.guest {
    width: 75%;
    display: flex;
    flex-direction: column;
    padding-top: 1px;
    font-size: 12px;
    line-height: 16px;
    background: linear-gradient(90deg, #62bdb5 84px, #1c2c7c 84px, #46589c 722px, #62bdb5 722px);
}

/* eNSP window */
.ensp {
    flex: 1;
    min-height: 0;
    display: flex;
    flex-direction: column;
    border: 1px solid #939ca3;
    border-radius: 5px;
    background: #a3bed5;
    overflow: hidden;
}
.ensp-head {
    position: relative;
    padding: 0 11px 11px 16px;
    background: linear-gradient(#e8f5fb, #cde0eb 44%, #a9c6dd 90%, #bcd2e4);
}
.streaks {
    position: absolute;
    right: 120px;
    top: 0;
    width: 480px;
    height: 100%;
}
.caption, .tools {
    position: relative;
}
.caption {
    display: grid;
    grid-template-columns: 1fr auto 1fr;
    height: 37px;
    padding-right: 5px;
}
.brand {
    display: flex;
    align-items: center;
}
.brand svg {
    margin-left: -3px;
    opacity: .8;
}
.brand b {
    padding: 0 3px;
    font: 900 24px/24px Inter, sans-serif;
    background: linear-gradient(#86aedb 20%, #5383b8 80%);
    background-clip: text;
    color: transparent;
}
.caption h2 {
    padding-top: 8px;
    font-size: 13px;
    color: #444;
}
.win-buttons {
    display: flex;
    justify-self: end;
    align-self: start;
    border: 1px solid #a3a9ae;
    border-top: 0;
    border-radius: 0 0 4px 4px;
    background: linear-gradient(#f4f8fa, #dbe7f0);
}
.win-buttons button {
    width: 33px;
    height: 20px;
}
.win-buttons button + button {
    border-left: 1px solid #a3a9ae;
}
.caption .win-buttons {
    margin-right: -8px;
}
.win-buttons .menu-button {
    width: 66px;
    gap: 3px;
    font-size: 13px;
    color: #555;
}
.win-buttons .close {
    width: 43px;
}
.tools {
    display: flex;
    height: 35px;
    border: 1px solid #a9bccb;
    border-radius: 4px;
    box-shadow: inset 0 1px #f0f7fb, 0 1px #c5d7e5;
}
.tool-group {
    display: flex;
    align-items: center;
    gap: 15px;
    padding: 0 5px 0 6px;
}
.tool-group:first-child {
    padding-left: 4px;
    border-right: 1px solid #a5b6c6;
}
.tool-group.middle {
    padding-left: 8px;
}
.tool-group.right {
    margin-left: auto;
    border-left: 1px solid #a5b6c6;
    background: linear-gradient(#e2eef6, #b6cde0);
}
.tool-group svg {
    width: 22px;
    height: 22px;
}
.ensp-main {
    flex: 1;
    min-height: 0;
    display: flex;
    padding: 7px 0 5px 5px;
    background: linear-gradient(#5a87a5, #a3bed5 7px);
}
.sidebar {
    width: 188px;
    display: flex;
    flex-direction: column;
    gap: 10px;
    margin-right: 4px;
}
.devices {
    flex: 1;
    border: 1px solid #8aa0bd;
    background: #fff;
}
.devices h3 {
    height: 28px;
    line-height: 26px;
    text-align: center;
    font-size: 15px;
    color: #1f568f;
    border-bottom: 1px solid #9db0c6;
    background: linear-gradient(#eef4fb, #d5e1ed);
}
.device-grid + h3 {
    height: 29px;
    font: 14px/28px "Liberation Sans", sans-serif;
    border-top: 1px solid #a9b5bf;
}
.device-grid {
    display: grid;
    grid-template-columns: repeat(4, 40px);
    gap: 10px 6px;
    padding: 2px 3px 20px;
}
.device-grid button {
    height: 40px;
}
.device-grid svg {
    width: 36px;
    height: 32px;
}
.device-grid .selected {
    border: 1px solid #c99b32;
    border-radius: 2px;
    background: linear-gradient(#fdf0c4 50%, #ffdc78 50%, #fdecb0);
}
.device-grid .selected svg {
    width: 28px;
    height: 28px;
}
.cable-grid {
    display: grid;
    grid-template-columns: 82px 84px;
    padding-top: 8px;
    font: 13px/16px "Liberation Sans", sans-serif;
    color: #000;
}
.cable-grid button {
    flex-direction: column;
    justify-content: start;
    gap: 10px;
    height: 80px;
}
.cable-grid svg {
    width: 40px;
    height: 40px;
    padding: 3px;
    border: 3px solid #a9c4e4;
    border-radius: 2px;
    outline: 1px solid #c0c8d0;
    outline-offset: -4px;
    background: #f3f3f3;
}
.description {
    position: relative;
    height: 188px;
    padding: 11px 10px;
    border: 1px solid #8aa0bd;
    background: #fff;
    color: #000;
}
.description::before {
    content: "";
    position: absolute;
    left: 11px;
    top: -8px;
    border: 8px solid transparent;
    border-top: 0;
    border-bottom-color: #fff;
}
.description b {
    font-size: 13px;
}
.description p {
    padding-top: 5px;
    font-family: "Noto Sans CJK TC", sans-serif;
    font-size: 16px;
}
.canvas {
    flex: 1;
    display: grid;
    grid-template: 1fr 16px / 1fr 16px;
    border: 1px solid #8aa0bd;
    background: #fff;
}
.topology {
    position: relative;
    overflow: hidden;
}
.scroll {
    display: flex;
    background: repeating-conic-gradient(#fff 0 25%, #d4d0c8 0 50%) 0 0 / 2px 2px;
}
.vertical {
    flex-direction: column;
}
.scroll button, .thumb {
    border: 1px solid #fff;
    border-right-color: #444;
    border-bottom-color: #444;
    box-shadow: inset -1px -1px #808080;
    background: #d4d0c8;
}
.scroll button {
    width: 16px;
    height: 16px;
}
.scroll .end {
    margin-top: auto;
}
.horizontal .end {
    margin: 0 0 0 auto;
}
.vertical .thumb {
    height: 34%;
}
.horizontal .thumb {
    width: 60%;
}
.scroll-corner {
    background: #f0f0f0;
}
.splitter {
    display: flex;
    align-items: center;
    width: 5px;
    padding-bottom: 40px;
}
.statusbar {
    display: flex;
    align-items: center;
    gap: 9px;
    height: 25px;
    padding: 1px 3px 0 10px;
    border-top: 1px solid #8497a6;
    background: linear-gradient(#dfecf5, #bfd6e6);
    font-family: "Noto Sans", "Noto Sans CJK TC", sans-serif;
    font-size: 14px;
    color: #2a5788;
}
.statusbar a {
    margin-left: auto;
    text-decoration: underline;
}
.statusbar svg {
    align-self: end;
    margin: 0 0 2px -6px;
}

/* PC1 dialog */
.cursor {
    position: absolute;
    left: 371px;
    top: 21px;
}
.dialog {
    position: absolute;
    left: 131px;
    top: 71px;
    width: 781px;
    padding: 0 4px 5px;
    border: 1px solid #a8a8a8;
    border-radius: 4px;
    background: #98b6cf;
    box-shadow: inset 0 0 0 1px #dde8f0;
    color: #000;
}
.latin {
    font-size: 11px;
}
.dialog-title {
    display: flex;
    gap: 2px;
    height: 21px;
    margin: 0 -3px;
    padding: 3px 7px 0 6px;
    background: linear-gradient(#f0f4fa, #b1cde6);
    border-bottom: 1px solid #9db3c6;
}
.dialog-title h2 {
    font-size: 13px;
    line-height: 20px;
    font-weight: 600;
    color: #24598f;
}
.dialog .win-buttons {
    margin: -3px 0 0 auto;
}
.dialog .win-buttons button {
    height: 19px;
}
.dialog-body {
    padding: 11px 12px;
    background: linear-gradient(#fff 10%, #e8effd);
}
.tabs {
    display: flex;
    gap: 2px;
}
.tabs button {
    width: 82px;
    height: 25px;
    border: 1px solid #a8a8a8;
    border-bottom: 0;
    background: linear-gradient(#e6eef8, #d3e3f1);
    color: #333;
}
.tabs .current {
    background: linear-gradient(#f2f9fe, #fff);
    color: #445566;
}
.tab-panel {
    padding: 28px 18px 10px 23px;
    border: 1px solid #a8a8a8;
    background: #fff;
}
.fields {
    display: grid;
    grid-template-columns: 95px 1fr;
    gap: 12px 0;
    padding: 0 62px 12px 17px;
}
.fields label, .ip-grid label {
    height: 22px;
    line-height: 22px;
}
.fields input, .ip {
    height: 22px;
    border: 1px solid #808080;
    border-right-color: #d4d0c8;
    border-bottom-color: #d4d0c8;
    box-shadow: inset 1px 1px #404040;
    background: #fff;
}
.fields input {
    width: 100%;
    padding: 0 1px 4px;
    font: 11px/16px "Noto Sans", sans-serif;
}
.fields .short {
    width: 100px;
}
.caret-field {
    position: relative;
    height: 22px;
}
.caret-field::after {
    content: "";
    position: absolute;
    left: 3px;
    top: 3px;
    height: 13px;
    border-left: 1px solid #000;
}
.group + .group {
    margin-top: 10px;
}
.group-tab {
    display: flex;
    height: 18px;
    border-left: 1px solid #e0e0e0;
}
.group-tab h3 {
    width: 66px;
    padding-left: 5px;
    border-top: 1px solid #e0e0e0;
    font-weight: bold;
    line-height: 24px;
    white-space: nowrap;
    color: #555;
}
.group-tab::after {
    content: "";
    flex: 1;
    border-bottom: 1px solid #e0e0e0;
}
.group-body {
    padding: 1px 0 0;
    border: 1px solid #e0e0e0;
    border-top: 0;
}
.modes, .ip-grid {
    display: grid;
    grid-template-columns: 95px 221px 64px 1fr;
    padding-left: 16px;
}
.modes {
    height: 30px;
}
.modes label {
    display: flex;
    align-items: center;
    gap: 5px;
    height: 26px;
    white-space: nowrap;
}
.modes input {
    appearance: none;
    width: 12px;
    height: 12px;
    margin: 0 0 2px 1px;
    border: 1px solid #777;
    border-right-color: #d4d0c8;
    border-bottom-color: #d4d0c8;
    box-shadow: inset 1px 1px #404040;
}
.modes input[type=radio] {
    border-radius: 50%;
}
.modes input:checked {
    background: radial-gradient(#000 2px, transparent 3px);
}
.modes input:disabled {
    background: #d4d0c8;
}
.modes .disabled {
    grid-column: span 2;
    color: #808080;
}
.ip-grid {
    gap: 13px 0;
    padding-bottom: 12px;
}
.ip {
    display: flex;
    width: 149px;
    padding: 1px 0 0 7px;
    font-size: 11px;
}
.ip input {
    width: 24px;
    margin-right: 4px;
    padding: 0;
    border: 0;
    box-shadow: none;
    background: none;
    font: inherit;
    line-height: 16px;
    height: 16px;
    text-align: center;
}
.ip input + input {
    margin-left: 5px;
}
.group .fields {
    gap: 11px 0;
    padding: 0 61px 12px 16px;
}
.apply {
    width: 75px;
    height: 23px;
    margin: 9px 1px 0 auto;
    border: 1px solid #b4b4b4;
    border-radius: 2px;
    background: linear-gradient(#fff, #e2e2e2);
    color: #777;
}

/* guest taskbar */
.taskbar {
    display: flex;
    align-items: center;
    height: 44px;
    padding: 1px 2px 0;
    border-top: 1px solid #d4d0c8;
    box-shadow: inset 0 1px #fff;
    background: #d4d0c8;
    color: #000;
}
.start {
    width: 47px;
    height: 38px;
    gap: 1px;
    border: 1px solid #fff;
    border-right-color: #404040;
    border-bottom-color: #404040;
    box-shadow: inset -1px -1px #808080;
}
.grip {
    width: 3px;
    height: 34px;
    border: 1px solid #fff;
    border-right-color: #808080;
    border-bottom-color: #808080;
}
.line {
    width: 2px;
    height: 22px;
    border-left: 1px solid #808080;
    background: #fff;
}
.taskbar > .grip {
    margin: 0 8px 0 7px;
}
.quick {
    width: 49px;
}
.running {
    width: 44px;
    height: 38px;
    margin-left: 2px;
    border: 1px solid #404040;
    border-right-color: #fff;
    border-bottom-color: #fff;
    background: #fff;
    box-shadow: 2px 0 #d4d0c8, 3px 0 #fff;
}
.langbar {
    display: flex;
    align-items: center;
    gap: 5px;
    margin-left: auto;
    font: 12px/16px "Liberation Mono", monospace;
}
.langbar .grip {
    margin-right: 3px;
}
.tray {
    display: flex;
    align-items: center;
    gap: 7px;
    width: 174px;
    height: 38px;
    margin-left: 4px;
    padding: 0 1px 0 5px;
    border: 1px solid #808080;
    border-right-color: #fff;
    border-bottom-color: #fff;
}
.tray svg:first-child {
    margin-right: 4px;
}
.tray time {
    flex: 1;
    text-align: center;
    font: 10px/16px "DejaVu Sans Mono", monospace;
}

/* host window list */
.tasklist {
    position: relative;
    display: flex;
    align-items: center;
    gap: 5px;
    height: 34px;
    padding: 0 3px 0 2px;
    border-top: 1px solid #666;
    background: linear-gradient(#ececec, #e0e0e0);
}
.tasklist button {
    justify-content: start;
    gap: 5px;
    width: 261px;
    height: 31px;
    padding: 0 6px;
    border-right: 1px solid #999;
    border-bottom: 1px solid #999;
    border-radius: 2px;
    background: #ededed;
    font-size: 14px;
    white-space: nowrap;
}
.tasklist .small {
    font-size: 13px;
}
.tasklist .dim {
    color: #8a8c8c;
}
.tasklist .dim svg {
    opacity: .6;
}
.tasklist .pressed {
    border: 1px solid #999;
    border-right-color: #ccc;
    border-bottom-color: #ccc;
    background: #dcdcdc;
}
.workspace {
    position: relative;
    z-index: 1;
    width: 54px;
    height: 27px;
    margin-left: auto;
    border: 1px solid #c4c4c4;
    background: rgba(200, 200, 200, .35);
    line-height: 25px;
    text-align: center;
}
.watermark {
    position: absolute;
    right: 10px;
    top: 5px;
    font: 16px/20px "Liberation Sans", sans-serif;
    color: rgba(255, 255, 255, .75);
    text-shadow: 1px 1px 1px rgba(150, 150, 150, .4);
}
```
